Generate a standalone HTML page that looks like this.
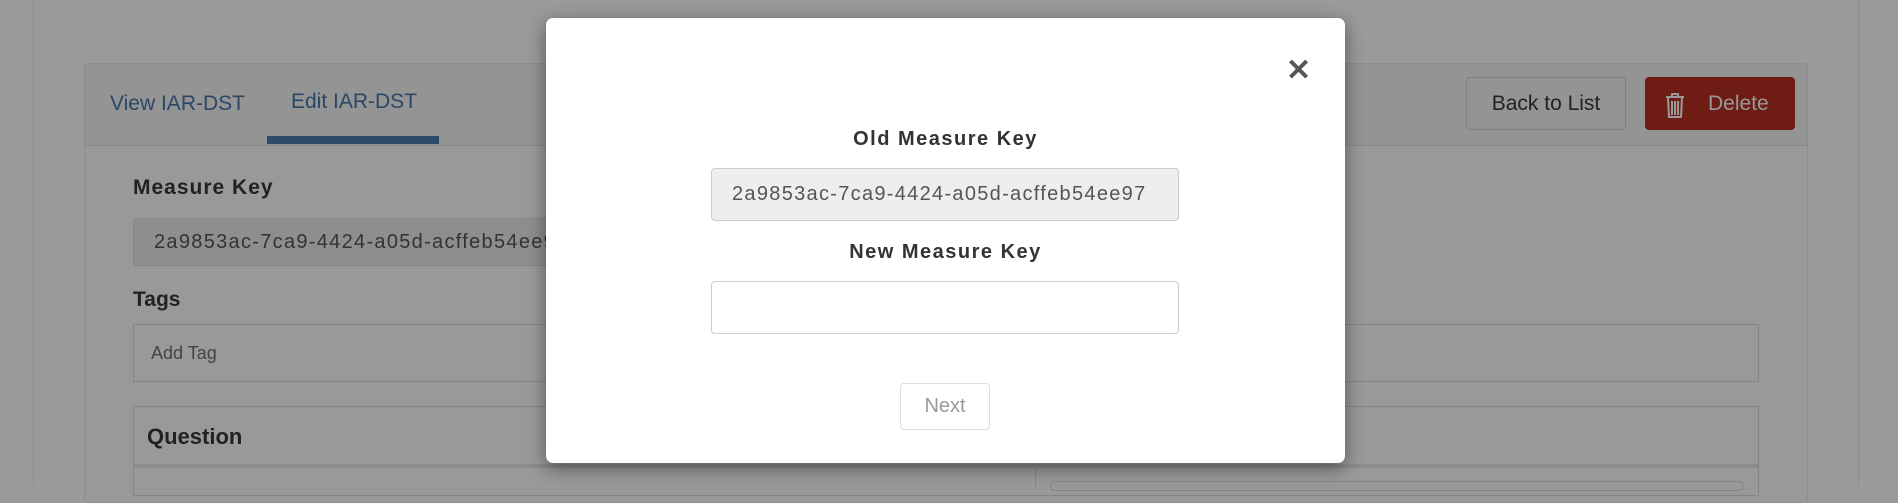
<!DOCTYPE html>
<html><head><meta charset="utf-8"><style>
*{box-sizing:border-box;margin:0;padding:0}
body{width:1898px;height:486px;overflow:hidden;background:#9a9a9a;font-family:"Liberation Sans",sans-serif;position:relative}
.abs{position:absolute}
.line{background:#8f8f8f}
</style></head><body>
<div class="abs line" style="left:33px;top:0;width:1px;height:486px"></div>
<div class="abs line" style="left:1858px;top:0;width:1px;height:486px"></div>
<!-- panel -->
<div class="abs" style="left:84px;top:63px;width:1724px;height:440px;border:1px solid #8e8e8e;border-radius:4px;background:#999"></div>
<div class="abs" style="left:85px;top:64px;width:1722px;height:82px;background:#949494;border-bottom:1px solid #8a8a8a;border-radius:4px 4px 0 0"></div>
<div class="abs" style="left:110px;top:92px;font-size:21px;color:#2b4766">View IAR-DST</div>
<div class="abs" style="left:291px;top:90px;font-size:21px;color:#2b4766">Edit IAR-DST</div>
<div class="abs" style="left:267px;top:136px;width:172px;height:8px;background:#2c4a6a"></div>
<div class="abs" style="left:1466px;top:77px;width:160px;height:53px;border:1px solid #808080;border-radius:4px;font-size:21px;color:#222;text-align:center;line-height:51px">Back to List</div>
<div class="abs" style="left:1645px;top:77px;width:150px;height:53px;background:#6e1c14;border-radius:4px;font-size:21px;color:#999;line-height:53px;padding-left:63px">Delete</div>
<svg class="abs" style="left:1665px;top:92px" width="20" height="26" viewBox="0 0 20 26" fill="none" stroke="#999" stroke-width="2"><path d="M1 5h18M7 5V2h6v3M3 6l1 19h12l1-19M7 9v14M10 9v14M13 9v14"/></svg>
<div class="abs" style="left:133px;top:176px;font-size:21px;font-weight:bold;color:#222;letter-spacing:1px">Measure Key</div>
<div class="abs" style="left:133px;top:218px;width:1000px;height:48px;background:#8e8e8e;border:1px solid #858585;border-radius:4px;font-size:20px;color:#333;line-height:46px;padding-left:20px;letter-spacing:1.3px">2a9853ac-7ca9-4424-a05d-acffeb54ee97</div>
<div class="abs" style="left:133px;top:288px;font-size:21px;font-weight:bold;color:#222">Tags</div>
<div class="abs" style="left:133px;top:324px;width:1626px;height:58px;border:1px solid #858585;font-size:18px;color:#444;line-height:56px;padding-left:17px">Add Tag</div>
<div class="abs" style="left:133px;top:406px;width:1626px;height:90px;border:1px solid #858585"></div>
<div class="abs" style="left:134px;top:464px;width:1624px;height:4px;background:#8c8c8c"></div>
<div class="abs" style="left:1035px;top:468px;width:1px;height:18px;background:#858585"></div>
<div class="abs" style="left:1050px;top:481px;width:693px;height:10px;border:1px solid #858585;border-radius:4px"></div>
<div class="abs" style="left:147px;top:424px;font-size:22px;font-weight:bold;color:#222">Question</div>
<!-- modal -->
<div class="abs" style="left:546px;top:18px;width:799px;height:445px;background:#fff;border-radius:7px;box-shadow:0 5px 18px rgba(0,0,0,.45)"></div>
<div class="abs" style="left:1286px;top:54px;font-size:30px;font-weight:bold;color:#555;line-height:34px">✕</div>
<div class="abs" style="left:546px;top:128px;width:799px;text-align:center;font-size:20px;font-weight:bold;color:#333;letter-spacing:1.5px">Old Measure Key</div>
<div class="abs" style="left:711px;top:168px;width:468px;height:53px;background:#eee;border:1px solid #ccc;border-radius:4px;font-size:20px;color:#555;line-height:51px;padding-left:20px;letter-spacing:1.3px">2a9853ac-7ca9-4424-a05d-acffeb54ee97</div>
<div class="abs" style="left:546px;top:241px;width:799px;text-align:center;font-size:20px;font-weight:bold;color:#333;letter-spacing:1.5px">New Measure Key</div>
<div class="abs" style="left:711px;top:281px;width:468px;height:53px;background:#fff;border:1px solid #ccc;border-radius:4px"></div>
<div class="abs" style="left:900px;top:383px;width:90px;height:47px;border:1px solid #ddd;border-radius:4px;font-size:20px;color:#999;text-align:center;line-height:45px">Next</div>
</body></html>
